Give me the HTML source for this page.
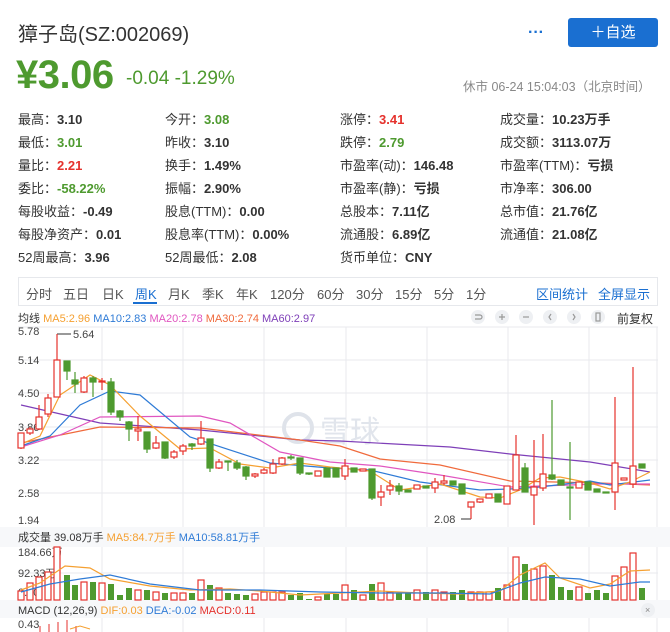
<!DOCTYPE html>
<html><head><meta charset="utf-8"><style>
*{margin:0;padding:0;box-sizing:border-box}
body{width:670px;height:632px;overflow:hidden;background:#fff;font-family:"Liberation Sans","Noto Sans CJK SC",sans-serif;color:#333;position:relative}
.a{position:absolute;white-space:nowrap}
.t{font-size:13px;color:#333}
.t b{font-weight:bold;color:#333}
.g{color:#4e9a2f!important}.r{color:#e5322d!important}
.tab{position:absolute;top:284px;font-size:13px;color:#555}
</style></head><body>
<div class="a" style="left:18px;top:18px;font-size:20px;color:#333">獐子岛(SZ:002069)</div>
<div class="a" style="left:528px;top:24px;font-size:16px;color:#1a6fd1;font-weight:bold">···</div>
<div class="a" style="left:568px;top:18px;width:90px;height:29px;background:#1a6fd1;border-radius:3px;color:#fff;font-size:15px;text-align:center;line-height:29px">＋自选</div>
<div class="a" style="left:16px;top:53px;font-size:40px;font-weight:bold;color:#4e9a2f;letter-spacing:-0.5px">¥3.06</div>
<div class="a" style="left:126px;top:68px;font-size:19px;color:#4e9a2f">-0.04 -1.29%</div>
<div class="a" style="left:463px;top:76px;font-size:12.5px;color:#888">休市 06-24 15:04:03（北京时间）</div>

<div class="a t" style="left:18px;top:109px">最高：<b>3.10</b></div>
<div class="a t" style="left:165px;top:109px">今开：<b class="g">3.08</b></div>
<div class="a t" style="left:340px;top:109px">涨停：<b class="r">3.41</b></div>
<div class="a t" style="left:500px;top:109px">成交量：<b>10.23万手</b></div>
<div class="a t" style="left:18px;top:132px">最低：<b class="g">3.01</b></div>
<div class="a t" style="left:165px;top:132px">昨收：<b>3.10</b></div>
<div class="a t" style="left:340px;top:132px">跌停：<b class="g">2.79</b></div>
<div class="a t" style="left:500px;top:132px">成交额：<b>3113.07万</b></div>
<div class="a t" style="left:18px;top:155px">量比：<b class="r">2.21</b></div>
<div class="a t" style="left:165px;top:155px">换手：<b>1.49%</b></div>
<div class="a t" style="left:340px;top:155px">市盈率(动)：<b>146.48</b></div>
<div class="a t" style="left:500px;top:155px">市盈率(TTM)：<b>亏损</b></div>
<div class="a t" style="left:18px;top:178px">委比：<b class="g">-58.22%</b></div>
<div class="a t" style="left:165px;top:178px">振幅：<b>2.90%</b></div>
<div class="a t" style="left:340px;top:178px">市盈率(静)：<b>亏损</b></div>
<div class="a t" style="left:500px;top:178px">市净率：<b>306.00</b></div>
<div class="a t" style="left:18px;top:201px">每股收益：<b>-0.49</b></div>
<div class="a t" style="left:165px;top:201px">股息(TTM)：<b>0.00</b></div>
<div class="a t" style="left:340px;top:201px">总股本：<b>7.11亿</b></div>
<div class="a t" style="left:500px;top:201px">总市值：<b>21.76亿</b></div>
<div class="a t" style="left:18px;top:224px">每股净资产：<b>0.01</b></div>
<div class="a t" style="left:165px;top:224px">股息率(TTM)：<b>0.00%</b></div>
<div class="a t" style="left:340px;top:224px">流通股：<b>6.89亿</b></div>
<div class="a t" style="left:500px;top:224px">流通值：<b>21.08亿</b></div>
<div class="a t" style="left:18px;top:247px">52周最高：<b>3.96</b></div>
<div class="a t" style="left:165px;top:247px">52周最低：<b>2.08</b></div>
<div class="a t" style="left:340px;top:247px">货币单位：<b>CNY</b></div>

<div class="a" style="left:18px;top:277px;width:640px;height:29px;border:1px solid #e6e8ec"></div>
<span class="tab" style="left:26px">分时</span><span class="tab" style="left:63px">五日</span><span class="tab" style="left:102px">日K</span><span class="tab" style="left:135px;color:#1a6fd1">周K</span><span class="tab" style="left:168px">月K</span><span class="tab" style="left:202px">季K</span><span class="tab" style="left:236px">年K</span><span class="tab" style="left:270px">120分</span><span class="tab" style="left:317px">60分</span><span class="tab" style="left:356px">30分</span><span class="tab" style="left:395px">15分</span><span class="tab" style="left:434px">5分</span><span class="tab" style="left:466px">1分</span>
<div class="a" style="left:133px;top:302px;width:24px;height:2px;background:#1a6fd1"></div>
<span class="tab" style="left:536px;color:#1a6fd1">区间统计</span><span class="tab" style="left:598px;color:#1a6fd1">全屏显示</span>

<div class="a" style="left:18px;top:310px;font-size:11px;color:#333">均线 <span style="color:#f5a031">MA5:2.96</span> <span style="color:#2f7bd6">MA10:2.83</span> <span style="color:#e056c0">MA20:2.78</span> <span style="color:#f06a3c">MA30:2.74</span> <span style="color:#7e3fb8">MA60:2.97</span></div>
<div class="a" style="left:617px;top:310px;font-size:12px;color:#333">前复权</div>

<svg class="a" style="left:0;top:0" width="670" height="632">
<g fill="#eef0f3"><circle cx="478" cy="317" r="7"/><circle cx="502" cy="317" r="7"/><circle cx="526" cy="317" r="7"/><circle cx="550" cy="317" r="7"/><circle cx="574" cy="317" r="7"/><circle cx="598" cy="317" r="7"/></g>
<g stroke="#999" stroke-width="1.2" fill="none"><path d="M475 315h5a2 2 0 0 1 0 4h-5"/><path d="M499 317h6M502 314v6"/><path d="M523 317h6"/><path d="M551 314l-2 3 2 3"/><path d="M573 314l2 3-2 3"/><rect x="596" y="313" width="4" height="8"/></g>
<g stroke="#e8eaee" stroke-width="1">
<line x1="18" y1="327" x2="658" y2="327"/><line x1="18" y1="360" x2="658" y2="360"/><line x1="18" y1="393" x2="658" y2="393"/><line x1="18" y1="427" x2="658" y2="427"/><line x1="18" y1="460" x2="658" y2="460"/><line x1="18" y1="493" x2="658" y2="493"/>
<line x1="102" y1="327" x2="102" y2="632"/><line x1="183" y1="327" x2="183" y2="632"/><line x1="264" y1="327" x2="264" y2="632"/><line x1="346" y1="327" x2="346" y2="632"/><line x1="427" y1="327" x2="427" y2="632"/><line x1="508" y1="327" x2="508" y2="632"/><line x1="589" y1="327" x2="589" y2="632"/><line x1="657" y1="327" x2="657" y2="632"/>
<line x1="18" y1="573" x2="658" y2="573"/>
</g>
<circle cx="298" cy="428" r="14" fill="none" stroke="#dfe3ea" stroke-width="4"/>
<text x="320" y="442" font-size="30" fill="#e1e5ec" font-family="Noto Sans CJK SC,sans-serif">雪球</text>
<g font-size="11" fill="#444">
<text x="18" y="335">5.78</text><text x="18" y="364">5.14</text><text x="18" y="397">4.50</text><text x="18" y="431">3.86</text><text x="18" y="464">3.22</text><text x="18" y="497">2.58</text><text x="18" y="524">1.94</text>
<text x="73" y="338">5.64</text><text x="434" y="523">2.08</text>
</g>
<path d="M57 334h14M471 519h-10" stroke="#333" fill="none"/>
<g fill="none" stroke-width="1.2">
<polyline stroke="#7e3fb8" points="21,405 100,423 200,430 300,440 340,441 450,447 510,454 590,462 650,472"/>
<polyline stroke="#f06a3c" points="21,443 100,427 200,428 300,440 340,446 380,459 440,465 510,481 600,483 650,485"/>
<polyline stroke="#e056c0" points="21,447 60,435 100,417 200,416 230,423 280,452 330,462 380,466 440,475 510,487 600,484 650,484"/>
<polyline stroke="#2f7bd6" points="21,446 50,436 80,405 110,391 140,395 190,437 270,463 330,468 370,470 420,482 480,490 510,489 540,487 590,481 610,485 650,480"/>
<polyline stroke="#f5a031" points="21,444 40,436 60,395 90,375 110,385 140,416 180,449 210,448 240,464 270,468 300,463 330,467 370,471 400,490 440,484 480,497 500,498 520,490 540,478 560,477 590,483 610,489 630,482 650,472"/>
</g>
<g stroke="#e5322d" fill="#fff" stroke-width="1.2">
<path d="M21 433v16M30 427v8M39 405v25M48 394v23M57 334v63M84 376v17M102 378v12M138 416v25M156 436v13M174 450v9M183 444v11M201 421v24M219 459v10M255 473v5M264 468v6M273 459v15M282 457v8M318 471v5M345 459v21M363 469v2M381 485v21M390 480v15M417 485v4M435 478v15M444 475v10M471 502v17M480 499v4M489 494v4M507 486v18M516 435v55M534 440v85M543 434v57M579 482v6M615 397v113M624 478v2M633 367v121"/>
<rect x="18" y="433" width="6" height="15"/><rect x="27" y="429" width="6" height="4"/><rect x="36" y="417" width="6" height="12"/><rect x="45" y="398" width="6" height="16"/><rect x="54" y="360" width="6" height="37"/><rect x="81" y="378" width="6" height="14"/><rect x="99" y="381" width="6" height="1"/><rect x="135" y="429" width="6" height="2"/><rect x="153" y="443" width="6" height="5"/><rect x="171" y="452" width="6" height="5"/><rect x="180" y="446" width="6" height="5"/><rect x="198" y="438" width="6" height="6"/><rect x="216" y="462" width="6" height="6"/><rect x="252" y="474" width="6" height="2"/><rect x="261" y="470" width="6" height="3"/><rect x="270" y="464" width="6" height="9"/><rect x="279" y="458" width="6" height="6"/><rect x="315" y="471" width="6" height="5"/><rect x="342" y="466" width="6" height="10"/><rect x="360" y="469" width="6" height="2"/><rect x="378" y="492" width="6" height="5"/><rect x="387" y="486" width="6" height="4"/><rect x="414" y="485" width="6" height="4"/><rect x="432" y="482" width="6" height="6"/><rect x="441" y="481" width="6" height="2"/><rect x="468" y="502" width="6" height="5"/><rect x="477" y="499" width="6" height="3"/><rect x="486" y="494" width="6" height="4"/><rect x="504" y="486" width="6" height="18"/><rect x="513" y="455" width="6" height="35"/><rect x="531" y="487" width="6" height="8"/><rect x="540" y="474" width="6" height="14"/><rect x="576" y="482" width="6" height="6"/><rect x="612" y="463" width="6" height="29"/><rect x="621" y="478" width="6" height="2"/><rect x="630" y="466" width="6" height="18"/>
</g>
<g stroke="#4e9a2f" fill="#4e9a2f" stroke-width="1.2">
<path d="M67 361v19M75 372v21M93 376v21M111 378v37M120 410v11M129 421v20M147 432v21M165 442v17M192 443v7M210 439v33M228 461v10M237 460v10M246 466v14M291 455v5M300 458v17M309 473v2M327 468v9M336 468v9M354 468v4M372 469v31M399 483v12M408 490v2M426 486v2M453 481v4M462 484v10M498 494v8M525 463v29M552 400v80M561 480v5M570 442v78M588 482v8M597 489v3M606 492v1M642 464v4"/>
<rect x="64" y="361" width="6" height="10"/><rect x="72" y="380" width="6" height="4"/><rect x="90" y="378" width="6" height="4"/><rect x="108" y="382" width="6" height="30"/><rect x="117" y="411" width="6" height="6"/><rect x="126" y="422" width="6" height="7"/><rect x="144" y="432" width="6" height="17"/><rect x="162" y="442" width="6" height="16"/><rect x="189" y="444" width="6" height="2"/><rect x="207" y="439" width="6" height="29"/><rect x="225" y="461" width="6" height="1"/><rect x="234" y="463" width="6" height="5"/><rect x="243" y="467" width="6" height="9"/><rect x="288" y="457" width="6" height="1"/><rect x="297" y="458" width="6" height="15"/><rect x="306" y="473" width="6" height="1"/><rect x="324" y="468" width="6" height="9"/><rect x="333" y="468" width="6" height="9"/><rect x="351" y="468" width="6" height="4"/><rect x="369" y="469" width="6" height="29"/><rect x="396" y="486" width="6" height="5"/><rect x="405" y="490" width="6" height="2"/><rect x="423" y="486" width="6" height="2"/><rect x="450" y="481" width="6" height="4"/><rect x="459" y="484" width="6" height="10"/><rect x="495" y="494" width="6" height="8"/><rect x="522" y="468" width="6" height="24"/><rect x="549" y="475" width="6" height="4"/><rect x="558" y="480" width="6" height="5"/><rect x="567" y="487" width="6" height="1"/><rect x="585" y="482" width="6" height="8"/><rect x="594" y="489" width="6" height="3"/><rect x="603" y="492" width="6" height="1"/><rect x="639" y="464" width="6" height="4"/>
</g>
<rect x="0" y="527" width="670" height="20" fill="#f7f8fa"/>
<rect x="0" y="600" width="670" height="18" fill="#f7f8fa"/>
<g font-size="11"><text x="18" y="541" fill="#333">成交量 39.08万手 <tspan fill="#f5a031">MA5:84.7万手</tspan> <tspan fill="#2f7bd6">MA10:58.81万手</tspan></text>
<text x="18" y="556" fill="#444">184.66万</text><text x="18" y="577" fill="#444">92.33万</text><text x="18" y="596" fill="#444">0.00</text>
<text x="18" y="614" fill="#333">MACD (12,26,9) <tspan fill="#f5a031">DIF:0.03</tspan> <tspan fill="#2f7bd6">DEA:-0.02</tspan> <tspan fill="#e5322d">MACD:0.11</tspan></text>
<text x="18" y="628" fill="#444">0.43</text></g>
<circle cx="648" cy="610" r="7" fill="#eef0f3"/><text x="645" y="613" font-size="9" fill="#888">×</text>
<g stroke="#e5322d" fill="#fff" stroke-width="1.2">
<rect x="18" y="591" width="6" height="9"/><rect x="27" y="583" width="6" height="17"/><rect x="36" y="577" width="6" height="23"/><rect x="45" y="572" width="6" height="28"/><rect x="54" y="547" width="6" height="53"/><rect x="81" y="582" width="6" height="18"/><rect x="99" y="583" width="6" height="17"/><rect x="135" y="590" width="6" height="10"/><rect x="153" y="592" width="6" height="8"/><rect x="171" y="593" width="6" height="7"/><rect x="180" y="593" width="6" height="7"/><rect x="198" y="580" width="6" height="20"/><rect x="216" y="588" width="6" height="12"/><rect x="252" y="594" width="6" height="6"/><rect x="261" y="592" width="6" height="8"/><rect x="270" y="592" width="6" height="8"/><rect x="279" y="592" width="6" height="8"/><rect x="315" y="597" width="6" height="3"/><rect x="342" y="585" width="6" height="15"/><rect x="360" y="595" width="6" height="5"/><rect x="378" y="583" width="6" height="17"/><rect x="387" y="592" width="6" height="8"/><rect x="414" y="590" width="6" height="10"/><rect x="432" y="590" width="6" height="10"/><rect x="441" y="592" width="6" height="8"/><rect x="468" y="592" width="6" height="8"/><rect x="477" y="592" width="6" height="8"/><rect x="486" y="592" width="6" height="8"/><rect x="504" y="585" width="6" height="15"/><rect x="513" y="557" width="6" height="43"/><rect x="531" y="569" width="6" height="31"/><rect x="540" y="566" width="6" height="34"/><rect x="576" y="587" width="6" height="13"/><rect x="612" y="576" width="6" height="24"/><rect x="621" y="567" width="6" height="33"/><rect x="630" y="553" width="6" height="47"/>
</g>
<g fill="#4e9a2f">
<rect x="64" y="575" width="6" height="25"/><rect x="72" y="585" width="6" height="15"/><rect x="90" y="582" width="6" height="18"/><rect x="108" y="584" width="6" height="16"/><rect x="117" y="595" width="6" height="5"/><rect x="126" y="588" width="6" height="12"/><rect x="144" y="590" width="6" height="10"/><rect x="162" y="593" width="6" height="7"/><rect x="189" y="593" width="6" height="7"/><rect x="207" y="585" width="6" height="15"/><rect x="225" y="593" width="6" height="7"/><rect x="234" y="594" width="6" height="6"/><rect x="243" y="595" width="6" height="5"/><rect x="288" y="595" width="6" height="5"/><rect x="297" y="593" width="6" height="7"/><rect x="306" y="599" width="6" height="1"/><rect x="324" y="594" width="6" height="6"/><rect x="333" y="594" width="6" height="6"/><rect x="351" y="590" width="6" height="10"/><rect x="369" y="584" width="6" height="16"/><rect x="396" y="593" width="6" height="7"/><rect x="405" y="593" width="6" height="7"/><rect x="423" y="592" width="6" height="8"/><rect x="450" y="592" width="6" height="8"/><rect x="459" y="590" width="6" height="10"/><rect x="495" y="588" width="6" height="12"/><rect x="522" y="564" width="6" height="36"/><rect x="549" y="575" width="6" height="25"/><rect x="558" y="587" width="6" height="13"/><rect x="567" y="590" width="6" height="10"/><rect x="585" y="593" width="6" height="7"/><rect x="594" y="590" width="6" height="10"/><rect x="603" y="593" width="6" height="7"/><rect x="639" y="588" width="6" height="12"/>
</g>
<g fill="none" stroke-width="1.2">
<polyline stroke="#f5a031" points="21,590 40,583 65,566 90,568 110,579 150,586 190,590 230,589 260,591 300,595 340,593 380,591 420,593 460,594 500,591 520,575 545,563 560,578 590,588 610,584 630,571 650,570"/>
<polyline stroke="#2f7bd6" points="21,592 50,584 80,579 110,575 150,584 200,590 260,590 320,592 380,593 440,593 490,594 520,583 545,577 580,579 610,586 640,582 650,582"/>
</g>
<path d="M40 632v-6M49 632v-8M58 632v-10M67 632v-12M76 632v-6" stroke="#e5322d"/>
<path d="M70 629l10-3 10 3" stroke="#f5a031" fill="none"/>
</svg>
</body></html>
